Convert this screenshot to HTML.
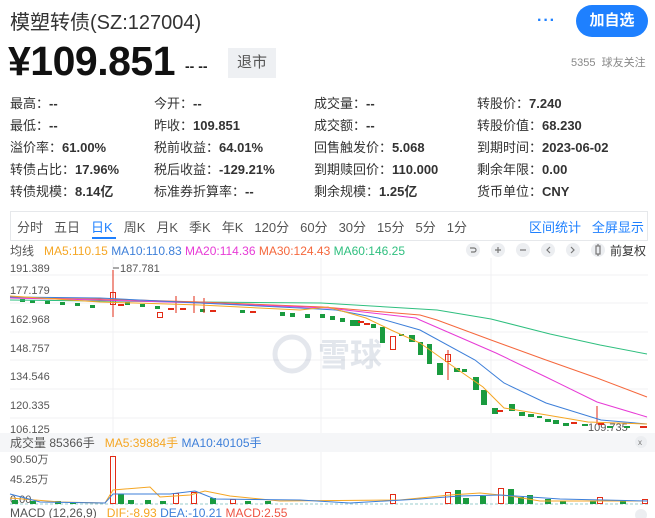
<!DOCTYPE html>
<html><head><meta charset="utf-8"><style>
*{margin:0;padding:0;box-sizing:border-box}
body{width:655px;height:518px;overflow:hidden;background:#fff;font-family:"Liberation Sans","Noto Sans CJK SC",sans-serif;color:#333;position:relative}
.a{position:absolute;white-space:nowrap}
.g span{font-weight:bold}
</style></head><body>
<div class="a" style="left:10px;top:6px;font-size:20px;color:#333">模塑转债(SZ:127004)</div>
<div class="a" style="left:537px;top:12px;font-size:16px;color:#1e80ff;font-weight:bold;letter-spacing:1px">···</div>
<div class="a" style="left:576px;top:5px;width:72px;height:32px;border-radius:16px;background:#1e80ff;color:#fff;font-size:15px;font-weight:bold;text-align:center;line-height:32px">加自选</div>
<div class="a" style="left:8px;top:38px;font-size:41px;font-weight:bold;color:#111;letter-spacing:-0.5px">¥109.851</div>
<div class="a" style="left:185px;top:58px;font-size:14px;font-weight:bold;color:#222">-- --</div>
<div class="a" style="left:228px;top:48px;width:48px;height:30px;background:#eef0f3;color:#555;font-size:15px;text-align:center;line-height:30px">退市</div>
<div class="a" style="left:571px;top:54px;font-size:11px;color:#888">5355&nbsp; 球友关注</div>

<div class="g" style="font-size:13px;color:#333">
<div class="a" style="left:10px;top:93px">最高：<span>--</span></div>
<div class="a" style="left:154px;top:93px">今开：<span>--</span></div>
<div class="a" style="left:314px;top:93px">成交量：<span>--</span></div>
<div class="a" style="left:477px;top:93px">转股价：<span>7.240</span></div>
<div class="a" style="left:10px;top:115px">最低：<span>--</span></div>
<div class="a" style="left:154px;top:115px">昨收：<span>109.851</span></div>
<div class="a" style="left:314px;top:115px">成交额：<span>--</span></div>
<div class="a" style="left:477px;top:115px">转股价值：<span>68.230</span></div>
<div class="a" style="left:10px;top:137px">溢价率：<span>61.00%</span></div>
<div class="a" style="left:154px;top:137px">税前收益：<span>64.01%</span></div>
<div class="a" style="left:314px;top:137px">回售触发价：<span>5.068</span></div>
<div class="a" style="left:477px;top:137px">到期时间：<span>2023-06-02</span></div>
<div class="a" style="left:10px;top:159px">转债占比：<span>17.96%</span></div>
<div class="a" style="left:154px;top:159px">税后收益：<span>-129.21%</span></div>
<div class="a" style="left:314px;top:159px">到期赎回价：<span>110.000</span></div>
<div class="a" style="left:477px;top:159px">剩余年限：<span>0.00</span></div>
<div class="a" style="left:10px;top:181px">转债规模：<span>8.14亿</span></div>
<div class="a" style="left:154px;top:181px">标准券折算率：<span>--</span></div>
<div class="a" style="left:314px;top:181px">剩余规模：<span>1.25亿</span></div>
<div class="a" style="left:477px;top:181px">货币单位：<span>CNY</span></div>
</div>

<div class="a" style="left:10px;top:211px;width:638px;height:30px;border:1px solid #e6e8eb"></div>
<div class="a" style="left:17px;top:217px;font-size:13px;color:#555;word-spacing:0">
<span style="margin-right:11px">分时</span><span style="margin-right:11px">五日</span><span style="margin-right:11px;color:#1e80ff">日K</span><span style="margin-right:11px">周K</span><span style="margin-right:11px">月K</span><span style="margin-right:11px">季K</span><span style="margin-right:11px">年K</span><span style="margin-right:11px">120分</span><span style="margin-right:11px">60分</span><span style="margin-right:11px">30分</span><span style="margin-right:11px">15分</span><span style="margin-right:11px">5分</span><span>1分</span></div>
<div class="a" style="left:92px;top:237px;width:24px;height:2px;background:#1e80ff"></div>
<div class="a" style="left:529px;top:217px;font-size:13px;color:#1e80ff">区间统计&nbsp;&nbsp; 全屏显示</div>

<div class="a" style="left:10px;top:242px;font-size:12px;color:#555">均线 &nbsp; <span style="color:#f5a623">MA5:110.15</span> <span style="color:#3d7fd9">MA10:110.83</span> <span style="color:#e73bd6">MA20:114.36</span> <span style="color:#f5683d">MA30:124.43</span> <span style="color:#2fbf7f">MA60:146.25</span></div>
<svg class="a" style="left:465px;top:241px" width="190" height="18">
<g fill="#eceef1"><circle cx="8" cy="9" r="7"/><circle cx="33" cy="9" r="7"/><circle cx="58" cy="9" r="7"/><circle cx="83" cy="9" r="7"/><circle cx="108" cy="9" r="7"/><circle cx="133" cy="9" r="7"/></g>
<g stroke="#777" fill="none" stroke-width="1.2"><path d="M5 7h4a2 2 0 0 1 0 4H6"/><path d="M30 9h6M33 6v6"/><path d="M55 9h6"/><path d="M85 6l-3 3 3 3"/><path d="M106 6l3 3-3 3"/><rect x="131" y="5" width="4" height="8"/><path d="M133 3v2M133 13v2"/></g>
<text x="145" y="14" font-size="12" fill="#333" font-family="Liberation Sans,Noto Sans CJK SC,sans-serif">前复权</text>
</svg>

<svg class="a" style="left:0;top:258px" width="655" height="260">
<g stroke="#f0f1f3" stroke-width="1">
<line x1="10" y1="17" x2="648" y2="17"/><line x1="10" y1="45" x2="648" y2="45"/><line x1="10" y1="74" x2="648" y2="74"/><line x1="10" y1="102" x2="648" y2="102"/><line x1="10" y1="131" x2="648" y2="131"/><line x1="10" y1="160" x2="648" y2="160"/>
<line x1="113" y1="0" x2="113" y2="250"/><line x1="321" y1="0" x2="321" y2="250"/><line x1="491" y1="0" x2="491" y2="250"/>
</g>
<g font-size="11" fill="#555" font-family="Liberation Sans,sans-serif">
<text x="10" y="14">191.389</text><text x="10" y="36">177.179</text><text x="10" y="65">162.968</text><text x="10" y="94">148.757</text><text x="10" y="122">134.546</text><text x="10" y="151">120.335</text><text x="10" y="175">106.125</text>
<text x="120" y="14">187.781</text><text x="588" y="173">109.735</text>
</g>
<line x1="113" y1="10" x2="119" y2="10" stroke="#555"/>
<g opacity="0.12" fill="none" stroke="#1e3a6a" stroke-width="5"><circle cx="292" cy="96" r="17"/></g>
<text x="318" y="108" font-size="32" fill="#1e3a6a" opacity="0.12" font-weight="bold" font-family="Noto Sans CJK SC,sans-serif">雪球</text>
<g fill="#1a9b3f">
<rect x="20" y="41" width="5" height="3"/><rect x="30" y="42" width="5" height="3"/><rect x="45" y="43" width="5" height="3"/><rect x="60" y="44" width="5" height="3"/><rect x="75" y="45" width="5" height="3"/><rect x="90" y="47" width="5" height="3"/><rect x="125" y="44" width="5" height="3"/><rect x="140" y="46" width="5" height="3"/><rect x="155" y="48" width="5" height="3"/><rect x="200" y="51" width="5" height="3"/><rect x="240" y="52" width="5" height="3"/><rect x="280" y="54" width="5" height="4"/><rect x="290" y="55" width="5" height="4"/><rect x="305" y="56" width="5" height="4"/><rect x="320" y="56" width="5" height="4"/><rect x="330" y="58" width="5" height="4"/><rect x="340" y="60" width="5" height="4"/><rect x="350" y="62" width="5" height="6"/><rect x="355" y="62" width="5" height="6"/><rect x="371" y="66" width="5" height="4"/>
<rect x="380" y="69" width="5" height="16"/><rect x="399" y="76" width="5" height="2"/><rect x="409" y="77" width="6" height="7"/><rect x="418" y="84" width="5" height="13"/><rect x="427" y="86" width="5" height="20"/><rect x="437" y="105" width="6" height="12"/><rect x="454" y="110" width="6" height="4"/><rect x="462" y="111" width="5" height="3"/><rect x="473" y="119" width="6" height="13"/><rect x="481" y="132" width="6" height="15"/><rect x="492" y="150" width="6" height="6"/><rect x="509" y="146" width="6" height="7"/><rect x="519" y="154" width="6" height="4"/><rect x="528" y="156" width="6" height="3"/><rect x="537" y="158" width="5" height="2"/><rect x="545" y="161" width="6" height="3"/><rect x="553" y="162" width="6" height="4"/><rect x="563" y="165" width="6" height="3"/><rect x="582" y="166" width="6" height="2"/><rect x="607" y="168" width="6" height="2"/><rect x="624" y="168" width="6" height="2"/>
</g>
<g fill="#e22b16"><rect x="118" y="46" width="6" height="2"/><rect x="168" y="50" width="6" height="2"/><rect x="180" y="50" width="6" height="2"/><rect x="210" y="52" width="6" height="2"/><rect x="250" y="53" width="6" height="2"/><rect x="358" y="63" width="6" height="2"/><rect x="364" y="65" width="6" height="2"/><rect x="497" y="152" width="6" height="2"/><rect x="571" y="164" width="6" height="2"/><rect x="598" y="165" width="6" height="2"/><rect x="640" y="168" width="7" height="2"/></g>
<g fill="none" stroke="#e22b16"><path d="M113 12v47"/><rect x="110.5" y="34.5" width="5" height="12"/><rect x="157.5" y="54.5" width="5" height="5"/><path d="M176 38v17M194 38v17M204 40v15"/><rect x="390.5" y="78.5" width="5" height="13"/><rect x="445.5" y="96.5" width="5" height="7"/><path d="M448 92v30"/><path d="M597 148v18"/></g>
<polyline fill="none" stroke="#2fbf7f" stroke-width="1" points="10,42 100,43 200,44 321,45 437,52 491,61 550,76 600,87 647,96"/>
<polyline fill="none" stroke="#f5683d" stroke-width="1" points="10,40 100,41 200,44 323,49 420,57 437,62 491,82 546,102 597,120 647,139"/>
<polyline fill="none" stroke="#e73bd6" stroke-width="1" points="10,40 100,42 200,45 328,50 416,60 420,62 496,95 546,119 597,144 647,159"/>
<polyline fill="none" stroke="#3d7fd9" stroke-width="1" points="10,39 100,40 200,45 300,50 336,52 378,60 420,72 475,102 504,125 546,145 601,162 647,166"/>
<polyline fill="none" stroke="#f5a623" stroke-width="1" points="10,38 100,44 200,47 300,52 328,49 366,60 391,72 420,85 454,109 483,129 504,150 529,154 588,164 647,166"/>
<rect x="0" y="175" width="655" height="19" fill="#f5f6f8"/>
<text x="10" y="189" font-size="12" fill="#555" font-family="Liberation Sans,Noto Sans CJK SC,sans-serif">成交量 85366手 &#160; <tspan fill="#f5a623">MA5:39884手</tspan> <tspan fill="#3d7fd9">MA10:40105手</tspan></text>
<circle cx="641" cy="184" r="6" fill="#eceef1"/><text x="638" y="187" font-size="8" fill="#777">x</text>
<g font-size="11" fill="#555" font-family="Liberation Sans,Noto Sans CJK SC,sans-serif"><text x="10" y="205">90.50万</text><text x="10" y="225">45.25万</text><text x="10" y="245">0.00</text></g>
<line x1="10" y1="246" x2="648" y2="246" stroke="#9cc" stroke-dasharray="3,2"/>
<g fill="#1a9b3f"><rect x="12" y="242" width="6" height="4"/><rect x="30" y="243" width="6" height="3"/><rect x="55" y="243" width="6" height="3"/><rect x="70" y="244" width="6" height="2"/><rect x="118" y="236" width="6" height="10"/><rect x="128" y="242" width="6" height="4"/><rect x="145" y="242" width="6" height="4"/><rect x="160" y="243" width="6" height="3"/><rect x="210" y="240" width="6" height="6"/><rect x="245" y="243" width="6" height="3"/><rect x="265" y="243" width="6" height="3"/><rect x="455" y="232" width="6" height="14"/><rect x="463" y="240" width="6" height="6"/><rect x="480" y="238" width="6" height="8"/><rect x="508" y="231" width="6" height="15"/><rect x="518" y="239" width="6" height="7"/><rect x="527" y="237" width="6" height="9"/><rect x="545" y="241" width="6" height="5"/><rect x="560" y="243" width="6" height="3"/><rect x="590" y="243" width="6" height="3"/><rect x="620" y="243" width="6" height="3"/></g>
<g fill="none" stroke="#e22b16"><rect x="110.5" y="198.5" width="5" height="47"/><rect x="173.5" y="235.5" width="5" height="10"/><rect x="191.5" y="234.5" width="5" height="11"/><rect x="230.5" y="241.5" width="5" height="4"/><rect x="390.5" y="236.5" width="5" height="9"/><rect x="445.5" y="234.5" width="5" height="11"/><rect x="498.5" y="230.5" width="5" height="15"/><rect x="597.5" y="239.5" width="5" height="6"/><rect x="642.5" y="241.5" width="5" height="4"/></g>
<polyline fill="none" stroke="#f5a623" points="10,240 60,244 105,245 113,232 150,229 160,239 190,237 205,233 230,238 280,243 400,242 450,237 480,235 510,238 540,243 648,243"/>
<polyline fill="none" stroke="#3d7fd9" points="10,236 40,244 105,245 113,236 170,236 195,233 215,241 300,242 350,245 420,241 460,238 500,237 560,241 648,243"/>
<text x="10" y="259" font-size="12" fill="#555" font-family="Liberation Sans,sans-serif">MACD (12,26,9) &#160; <tspan fill="#f5a623">DIF:-8.93</tspan> <tspan fill="#3d7fd9">DEA:-10.21</tspan> <tspan fill="#e54">MACD:2.55</tspan></text>
<circle cx="641" cy="257" r="6" fill="#eceef1"/>
</svg>
</body></html>
